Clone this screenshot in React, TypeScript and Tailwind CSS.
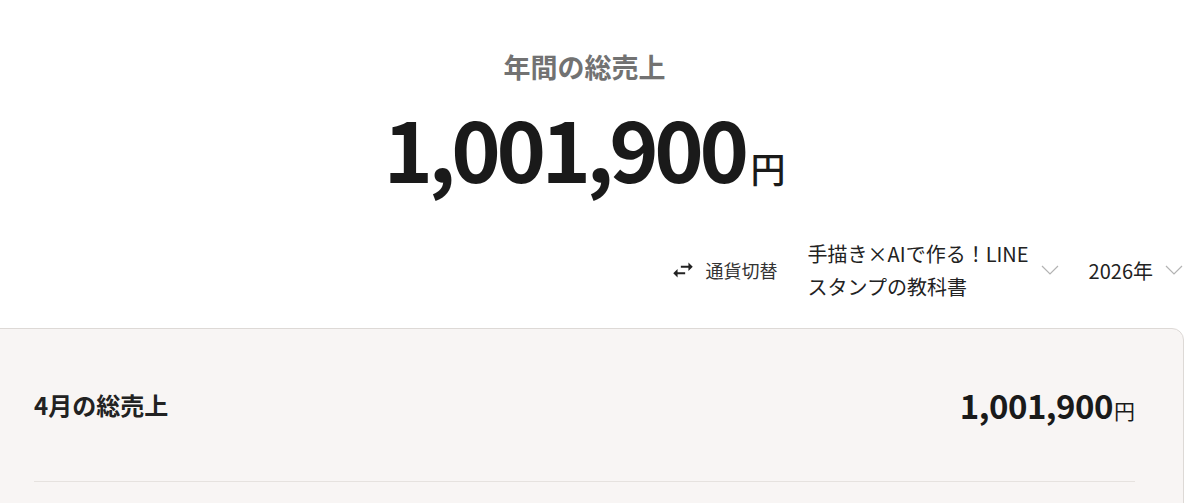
import { MdSwapHoriz } from "react-icons/md";

const font = { fontFamily: '"Noto Sans CJK JP", "Noto Sans", sans-serif' };

function Chevron() {
  return (
    <svg width="18" height="10" viewBox="0 0 18 10" fill="none" className="shrink-0 text-[#b3b3b3]">
      <polyline points="1,1 9,9 17,1" stroke="currentColor" strokeWidth="1.2" />
    </svg>
  );
}

function Select({ children }: { children: React.ReactNode }) {
  return (
    <button className="flex items-center gap-3 text-left text-[20px] leading-[33px] text-[#222]">
      <span>{children}</span>
      <Chevron />
    </button>
  );
}

export default function App() {
  return (
    <main className="min-h-screen overflow-hidden bg-white" style={font}>
      <div className="ml-[-15px] w-[1199px]">
        <section className="flex flex-col items-center pt-[53px]">
          <h2 className="text-[27px] font-bold leading-none text-[#727272]">年間の総売上</h2>
          <p className="mt-[25px] flex items-baseline text-[#1a1a1a]">
            <span className="text-[84px] font-bold leading-none tracking-[-4.5px]">1,001,900</span>
            <span className="ml-1.5 text-[35px] font-medium leading-none">円</span>
          </p>
        </section>

        <div className="mt-[48px] flex items-center justify-end gap-[30px] pr-px">
          <button className="flex items-center gap-2.5 text-[18px] text-[#333]">
            <MdSwapHoriz size={26} className="text-[#222]" />
            通貨切替
          </button>
          <Select>
            手描き×AIで作る！LINE
            <br />
            スタンプの教科書
          </Select>
          <Select>2026年</Select>
        </div>

        <div className="mt-[25px] rounded-xl border border-[#ddd9d6] bg-[#f8f5f4] px-[48px]">
          <div className="flex items-center justify-between border-b border-[#e6e2df] py-[58px]">
            <h3 className="text-[24px] font-bold leading-9 text-[#222]">4月の総売上</h3>
            <p className="flex items-baseline text-[#1a1a1a]">
              <span className="text-[33px] font-bold leading-9 tracking-[-0.5px]">1,001,900</span>
              <span className="ml-px text-[21px] leading-none">円</span>
            </p>
          </div>
          <div className="h-10" />
        </div>
      </div>
    </main>
  );
}
